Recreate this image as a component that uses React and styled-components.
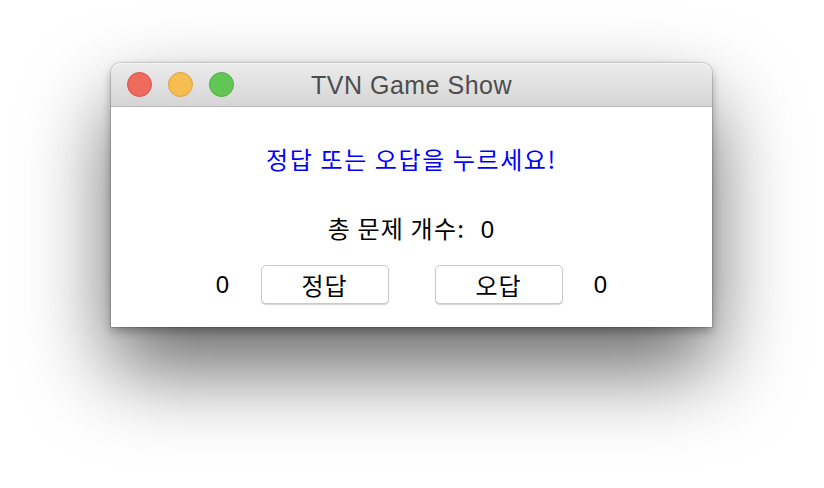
import React, { useState } from "react";
import styled, { createGlobalStyle } from "styled-components";

const Global = createGlobalStyle`
  html, body { margin: 0; padding: 0; background: #ffffff; }
  body { width: 824px; height: 488px; overflow: hidden; }
`;

const Stage = styled.div`
  width: 824px;
  height: 488px;
  box-sizing: border-box;
  padding: 63px 0 0 111px;
  background: #ffffff;
`;

const Window = styled.div`
  width: 601px;
  display: flex;
  flex-direction: column;
  border-radius: 10px 10px 0 0;
  background: #ffffff;
  box-shadow: 0 0 0 1px rgba(0, 0, 0, 0.12), 0 4px 10px rgba(0, 0, 0, 0.3),
    0 42px 84px rgba(0, 0, 0, 0.6);
`;

const TitleBar = styled.div`
  height: 43px;
  display: grid;
  grid-template-columns: 1fr auto 1fr;
  align-items: center;
  border-radius: 10px 10px 0 0;
  background: linear-gradient(#ececec, #d5d5d5);
  border-bottom: 1px solid #b9b9b9;
  box-shadow: inset 0 1px 0 #f6f6f6;
`;

const Lights = styled.div`
  display: flex;
  gap: 16px;
  padding-left: 16px;
`;

const Light = styled.span`
  width: 23px;
  height: 23px;
  border-radius: 50%;
  background: ${(p) => p.$fill};
  border: 1px solid ${(p) => p.$edge};
`;

const Title = styled.div`
  font-family: "Liberation Sans", Arial, sans-serif;
  font-size: 25px;
  color: #4d4d4d;
  letter-spacing: 0.5px;
  padding-top: 1px;
`;

const Content = styled.div`
  height: 220px;
  box-sizing: border-box;
  padding-top: 38px;
  display: flex;
  flex-direction: column;
  align-items: center;
  font-family: "Liberation Sans", "Noto Sans CJK KR", sans-serif;
  color: #000000;
`;

const Prompt = styled.div`
  font-family: "Noto Sans CJK KR", sans-serif;
  font-size: 24px;
  line-height: 28px;
  color: #0000ff;
  letter-spacing: 1.6px;
`;

const Total = styled.div`
  margin-top: 41px;
  font-size: 24px;
  line-height: 28px;
  white-space: pre;
  letter-spacing: 1.2px;
  & > span.k { font-family: "Noto Sans CJK KR", sans-serif; }
`;

const Row = styled.div`
  margin-top: 21px;
  display: flex;
  align-items: center;
`;

const Score = styled.span`
  font-family: "Liberation Sans", Arial, sans-serif;
  font-size: 24px;
  width: 16px;
  text-align: center;
`;

const Button = styled.button`
  width: 128px;
  height: 39px;
  margin: ${(p) => p.$margin};
  padding: 0;
  background: #ffffff;
  border: 1px solid #cacaca;
  border-radius: 5px;
  box-shadow: 0 1px 1px rgba(0, 0, 0, 0.18);
  font-family: "Noto Sans CJK KR", sans-serif;
  font-size: 24px;
  letter-spacing: 1px;
  color: #000000;
  line-height: 1;
  cursor: pointer;
`;

export default function App() {
  const [right, setRight] = useState(0);
  const [wrong, setWrong] = useState(0);
  return (
    <Stage>
      <Global />
      <Window>
        <TitleBar>
          <Lights>
            <Light $fill="#ee6a5f" $edge="#d5554b" />
            <Light $fill="#f6be50" $edge="#dba33e" />
            <Light $fill="#62c655" $edge="#4fac45" />
          </Lights>
          <Title>TVN Game Show</Title>
          <div />
        </TitleBar>
        <Content>
          <Prompt>정답 또는 오답을 누르세요!</Prompt>
          <Total>
            <span className="k">총 문제 개수:</span>  {right + wrong}
          </Total>
          <Row>
            <Score>{right}</Score>
            <Button $margin="0 46px 0 30px" onClick={() => setRight(right + 1)}>정답</Button>
            <Button $margin="0 30px 0 0" onClick={() => setWrong(wrong + 1)}>오답</Button>
            <Score>{wrong}</Score>
          </Row>
        </Content>
      </Window>
    </Stage>
  );
}
